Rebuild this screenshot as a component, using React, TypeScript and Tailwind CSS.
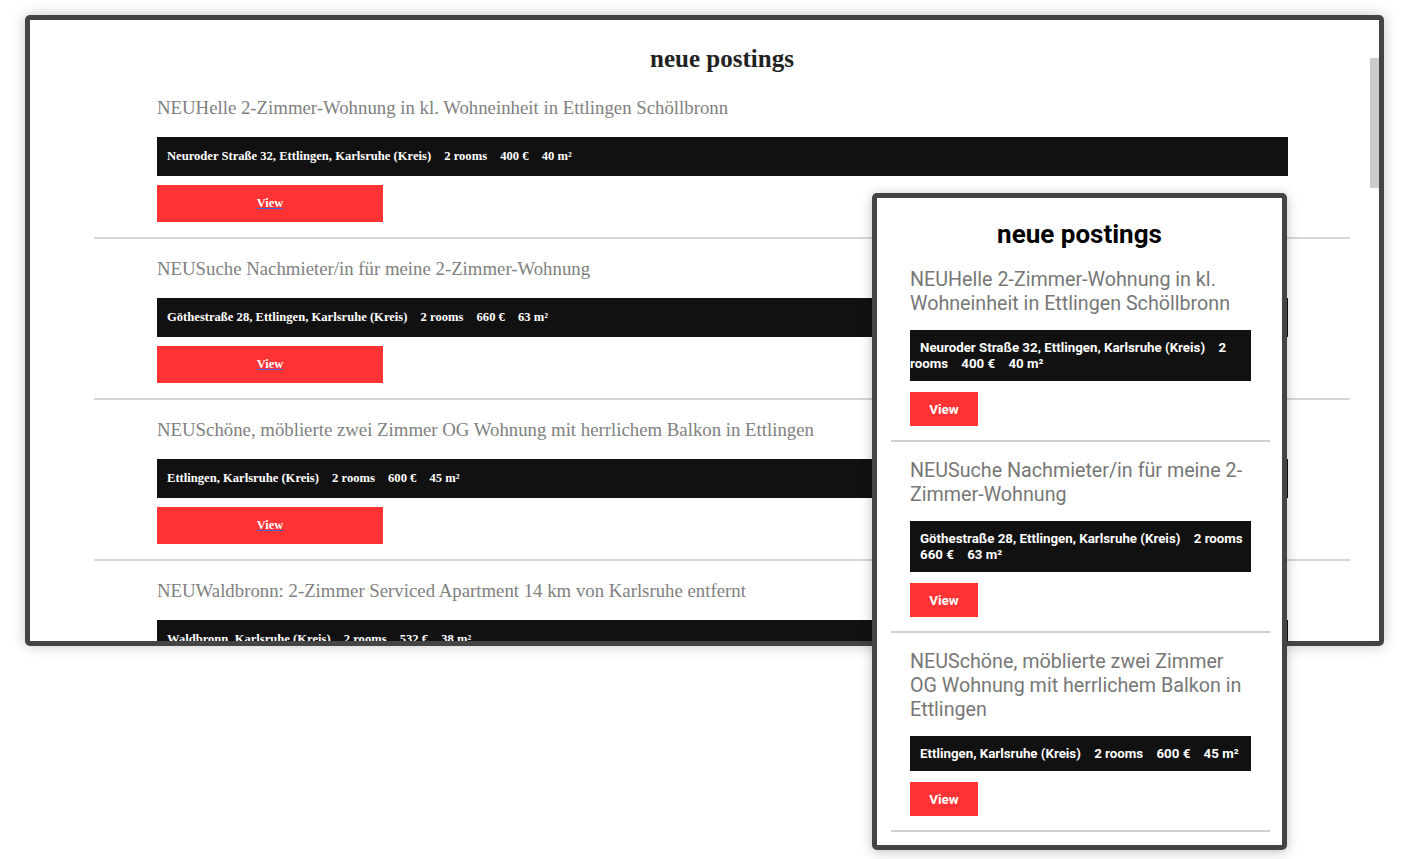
import React from "react";

type Posting = {
  title: string;
  address: string;
  rooms: string;
  price: string;
  size: string;
};

const postings: Posting[] = [
  {
    title: "NEUHelle 2-Zimmer-Wohnung in kl. Wohneinheit in Ettlingen Schöllbronn",
    address: "Neuroder Straße 32, Ettlingen, Karlsruhe (Kreis)",
    rooms: "2 rooms",
    price: "400 €",
    size: "40 m²",
  },
  {
    title: "NEUSuche Nachmieter/in für meine 2-Zimmer-Wohnung",
    address: "Göthestraße 28, Ettlingen, Karlsruhe (Kreis)",
    rooms: "2 rooms",
    price: "660 €",
    size: "63 m²",
  },
  {
    title: "NEUSchöne, möblierte zwei Zimmer OG Wohnung mit herrlichem Balkon in Ettlingen",
    address: "Ettlingen, Karlsruhe (Kreis)",
    rooms: "2 rooms",
    price: "600 €",
    size: "45 m²",
  },
  {
    title: "NEUWaldbronn: 2-Zimmer Serviced Apartment 14 km von Karlsruhe entfernt",
    address: "Waldbronn, Karlsruhe (Kreis)",
    rooms: "2 rooms",
    price: "532 €",
    size: "38 m²",
  },
];

const DesktopItem: React.FC<{ p: Posting }> = ({ p }) => (
  <li className="pt-[19px] pb-[15px] pl-[63px] pr-[62px] border-b-2 border-[#d6d6d6]">
    <h2 className="text-[18.8px] leading-[22px] text-[#808080]">{p.title}</h2>
    <div className="mt-[18px] h-[39px] bg-[#111111] text-white font-bold text-[12.6px] leading-[39px]">
      <span className="pl-[10px]">{p.address}</span>{" "}
      <span className="pl-[10px]">{p.rooms}</span>{" "}
      <span className="pl-[10px]">{p.price}</span>{" "}
      <span className="pl-[10px]">{p.size}</span>
    </div>
    <a className="mt-[9px] flex h-[37px] w-[226px] items-center justify-center bg-[#ff3333] text-white font-bold text-[12.5px] underline decoration-[#4a64d8]">
      View
    </a>
  </li>
);

const MobileItem: React.FC<{ p: Posting }> = ({ p }) => (
  <li className="pt-[17px] pb-[14px] pl-[19px] pr-[19px] border-b-2 border-[#d0d0d0]">
    <h2 className="text-[19.7px] leading-[24px] text-[#777777]">{p.title}</h2>
    <div className="mt-[14px] bg-[#111111] py-[9.5px] text-white font-bold text-[13.3px] leading-[16px]">
      <span className="pl-[10px]">{p.address}</span>{" "}
      <span className="pl-[10px]">{p.rooms}</span>{" "}
      <span className="pl-[10px]">{p.price}</span>{" "}
      <span className="pl-[10px]">{p.size}</span>
    </div>
    <a className="mt-[11px] flex h-[34px] w-[68px] items-center justify-center bg-[#ff3333] text-white font-bold text-[13.5px]">
      View
    </a>
  </li>
);

export default function App() {
  return (
    <div className="relative h-[859px] w-[1410px] overflow-hidden bg-white pl-[25px] pt-[15px]">
      {/* desktop window */}
      <div className="flex h-[631px] w-[1359px] overflow-hidden rounded-[5px] border-[5px] border-[#444444] bg-white shadow-[0_0_14px_rgba(0,0,0,0.22)] font-['Liberation_Serif',serif]">
        <div className="flex-1 overflow-hidden">
          <h1 className="pt-[25px] mb-[5px] ml-[64px] w-[1256px] text-center text-[25px] leading-[28px] font-bold text-[#222222]">
            neue postings
          </h1>
          <ul className="ml-[64px] w-[1256px]">
            {postings.map((p) => (
              <DesktopItem key={p.title} p={p} />
            ))}
          </ul>
        </div>
        <div className="w-[9px] pt-[38px]">
          <div className="h-[130px] bg-[#cccccc]" />
        </div>
      </div>

      {/* mobile window */}
      <div className="absolute left-[872px] top-[193px] h-[657px] w-[415px] overflow-hidden rounded-[5px] border-[5px] border-[#444444] bg-white shadow-[0_2px_12px_rgba(0,0,0,0.25)] font-['Roboto',sans-serif]">
        <h1 className="pt-[22px] mb-[3px] text-center text-[26px] leading-[28px] font-bold text-black">
          neue postings
        </h1>
        <ul className="ml-[14px] w-[379px]">
          {postings.slice(0, 3).map((p) => (
            <MobileItem key={p.title} p={p} />
          ))}
        </ul>
      </div>
    </div>
  );
}
